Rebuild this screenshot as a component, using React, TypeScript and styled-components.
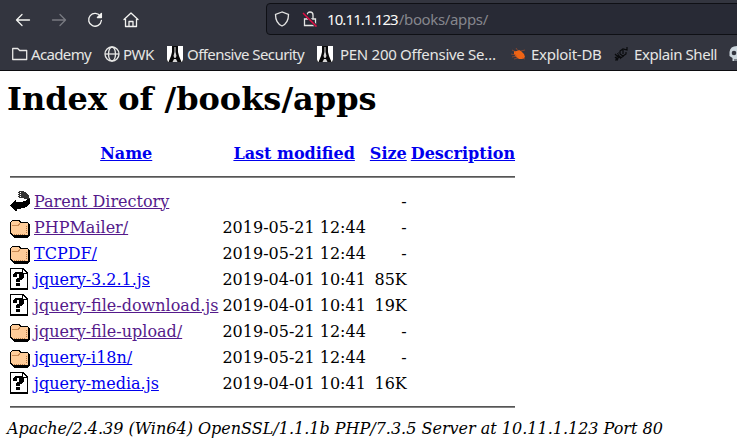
import React from 'react';
import styled, { createGlobalStyle } from 'styled-components';

const GlobalStyle = createGlobalStyle`
  html, body { margin: 0; background: #fff; overflow: hidden; }
`;

const Window = styled.div`
  width: 737px;
  height: 448px;
  overflow: hidden;
`;

const Chrome = styled.header`
  box-sizing: border-box;
  height: 71px;
  background: #33353f;
  border-bottom: 1px solid #0c0c10;
  font-family: 'Noto Sans', sans-serif;
  font-size: 15px;
  color: #e6e6e4;
  overflow: hidden;
`;

const NavBar = styled.nav`
  display: flex;
  align-items: center;
  height: 38px;
  padding-left: 15px;
`;

const NavIcon = styled.svg<{ $dim?: boolean }>`
  flex: none;
  width: 16px;
  height: 16px;
  margin: 2px 20px 0 0;
  fill: none;
  stroke: ${(p) => (p.$dim ? '#797a81' : '#f3f3f1')};
  stroke-width: 1.3;
  stroke-linecap: round;
  stroke-linejoin: round;
`;

const AddressBar = styled.div`
  box-sizing: border-box;
  display: flex;
  align-items: center;
  flex: none;
  width: 500px;
  height: 32px;
  margin-left: 107px;
  padding-left: 7px;
  background: #282a35;
  border: 1px solid #0f1015;
  border-radius: 4px;
`;

const BarIcon = styled.svg`
  flex: none;
  width: 16px;
  height: 16px;
  margin-right: 12px;
  fill: none;
  stroke: #e5e5e4;
  stroke-width: 1.3;
`;

const Url = styled.span`
  white-space: pre;
  color: #85868d;
  margin-left: -3px;
  letter-spacing: -0.36px;
`;

const Host = styled.span`
  color: #fafaf8;
  letter-spacing: -0.9px;
  margin-right: 1px;
`;

const Bookmarks = styled.div`
  display: flex;
  height: 32px;
  padding-left: 12px;
`;

const Bookmark = styled.div<{ $width: number }>`
  display: flex;
  flex: none;
  align-items: center;
  width: ${(p) => p.$width}px;
  white-space: nowrap;
`;

const BookmarkLabel = styled.span<{ $gap: number; $spacing: number }>`
  margin-left: ${(p) => p.$gap}px;
  letter-spacing: ${(p) => p.$spacing}px;
`;

const BookmarkIcon = styled.svg`
  flex: none;
  width: 16px;
  height: 16px;
`;

const Page = styled.main`
  padding: 9px 7px 0;
  font-family: 'DejaVu Serif', serif;
  font-size: 16px;
  line-height: 19px;
  color: #000;
`;

const Title = styled.h1`
  margin: 0 0 23px;
  font-size: 32px;
  line-height: 38px;
  font-weight: bold;
`;

const Listing = styled.table`
  border-collapse: separate;
  border-spacing: 2px;
  white-space: pre;
`;

const Cell = styled.td<{ $right?: boolean }>`
  padding: 1px;
  text-align: ${(p) => (p.$right ? 'right' : 'left')};
`;

const Heading = styled.th`
  padding: 1px;
  vertical-align: top;
`;

const Link = styled.a<{ $visited?: boolean }>`
  color: ${(p) => (p.$visited ? '#551a8b' : '#0000ee')};
  text-decoration: underline;
`;

const Rule = styled.hr<{ $top?: boolean }>`
  height: 0;
  margin: ${(p) => (p.$top ? 9 : 8)}px 0 8px;
  border: solid;
  border-width: 1px 0;
  border-color: #555 transparent #858585;
`;

const FileIcon = styled.svg`
  display: block;
  width: 20px;
  height: 22px;
`;

const Signature = styled.address`
  font-style: italic;
  white-space: nowrap;
`;

type Kind = 'back' | 'folder' | 'unknown';

const EntryIcon = ({ kind }: { kind: Kind }) => (
  <FileIcon viewBox="0 0 20 22" shapeRendering="crispEdges">
    {kind === 'back' && (
      <>
        <path fill="#000" d="M0 15 6 9v3h4l5-1 3-2h2v4l-2 3-4 2-7 1v2H5Z" />
        <path fill="#333" d="M8 1h5l4 2 2 3 1 3h-5l-3-1H8Z" />
        <path stroke="#fff" strokeDasharray="1 1" d="M8.5 1v7M10.5 2v6" />
      </>
    )}
    {kind === 'folder' && (
      <>
        <path fill="#000" d="M2 4h7l2 2h6l2 2 1 1v10l-2 3H4l-4-4V6Z" />
        <path fill="#ffcc99" d="M2 5h7l1 2h7l1 1v10l-1 1H3l-2-2V6Z" />
        <path fill="none" stroke="#c98a54" d="M2 9.500h6l2-2" />
        <path fill="none" stroke="#b77945" strokeDasharray="1 1" d="M16.500 10v8M4 18.500h12" />
      </>
    )}
    {kind === 'unknown' && (
      <>
        <path fill="#000" d="M0 0h13l5 5v17H0Z" />
        <path fill="#fff" d="M1 1h11v5h5v14H1Z" />
        <path fill="#fff" d="M13 2v3h3Z" />
        <path fill="#000" d="M3 6h1V5h1V4h7v1h1v1h1v4h-1v1h-1v1h-2v2H6v-3h1v-1h2V6H7v3H3ZM6 15h4v3H6Z" />
      </>
    )}
  </FileIcon>
);

const OffSecIcon = () => (
  <BookmarkIcon viewBox="0 0 16 16">
    <path fill="#fff" d="M0 0h16v16H0Z" />
    <path fill="#090909" d="M5 0h6v6l1 4 2.500 6h-13L4 10l1-4Z" />
    <path fill="#222" d="M0 13.500V16h1ZM16 13.500V16h-1Z" />
    <path fill="#d8d8d8" d="M7.500 1h1v5l1 4-1 2h-1l-1-2 1-4ZM7 13h2l1.500 3h-5Z" />
  </BookmarkIcon>
);

interface Entry {
  kind: Kind;
  name: string;
  date?: string;
  size: string;
  visited?: boolean;
}

const entries: Entry[] = [
  { kind: 'back', name: 'Parent Directory', size: '-', visited: true },
  { kind: 'folder', name: 'PHPMailer/', date: '2019-05-21 12:44', size: '-', visited: true },
  { kind: 'folder', name: 'TCPDF/', date: '2019-05-21 12:44', size: '-' },
  { kind: 'unknown', name: 'jquery-3.2.1.js', date: '2019-04-01 10:41', size: '85K' },
  { kind: 'unknown', name: 'jquery-file-download.js', date: '2019-04-01 10:41', size: '19K', visited: true },
  { kind: 'folder', name: 'jquery-file-upload/', date: '2019-05-21 12:44', size: '-', visited: true },
  { kind: 'folder', name: 'jquery-i18n/', date: '2019-05-21 12:44', size: '-' },
  { kind: 'unknown', name: 'jquery-media.js', date: '2019-04-01 10:41', size: '16K' },
];

const BrowserChrome = () => (
  <Chrome>
    <NavBar>
      <NavIcon viewBox="0 0 16 16"><path d="M14.500 8H1.500M7 2.500 1.500 8 7 13.500" /></NavIcon>
      <NavIcon $dim viewBox="0 0 16 16"><path d="M1.500 8h13M9 2.500 14.500 8 9 13.500" /></NavIcon>
      <NavIcon viewBox="0 0 16 16">
        <path d="M13.500 4.500A6.400 6.400 0 1 0 14.400 8.500" />
        <path fill="#f3f3f1" d="M14.400 1.500v4h-4Z" />
      </NavIcon>
      <NavIcon viewBox="0 0 16 16">
        <path d="M1 7.500 8 1l7 6.500M2.500 7v7.500h11V7M6 14V9.500h4V14" />
      </NavIcon>
      <AddressBar>
        <BarIcon viewBox="0 0 16 16">
          <path d="M8 1 1.500 3.500C1.500 9 3.500 13 8 15c4.500-2 6.500-6 6.500-11.500Z" />
        </BarIcon>
        <BarIcon viewBox="0 0 16 16">
          <path d="M2.500 8h11v6.500h-11ZM5 8V4a3 3 0 0 1 6 0v4" />
          <path stroke="#282a35" strokeWidth="3" d="m2 2 12 13" />
          <path stroke="#e30c43" strokeWidth="1.500" d="m1 2 13.500 13.500" />
        </BarIcon>
        <Url><Host>10.11.1.123</Host>/books/apps/</Url>
      </AddressBar>
    </NavBar>
    <Bookmarks>
      <Bookmark $width={92}>
        <BookmarkIcon viewBox="0 0 16 16">
          <path fill="none" stroke="#e8e8e6" strokeWidth="1.3" strokeLinejoin="round" d="M.7 2.500h5l2 2h7v9H.7Z" />
        </BookmarkIcon>
        <BookmarkLabel $gap={3} $spacing={-0.65}>Academy</BookmarkLabel>
      </Bookmark>
      <Bookmark $width={63}>
        <BookmarkIcon viewBox="0 0 16 16">
          <g fill="none" stroke="#e8e8e6" strokeWidth="1.3">
            <circle cx="8" cy="8" r="7" /><ellipse cx="8" cy="8" rx="3.500" ry="7" /><path d="M1 8h14" />
          </g>
        </BookmarkIcon>
        <BookmarkLabel $gap={3} $spacing={-0.5}>PWK</BookmarkLabel>
      </Bookmark>
      <Bookmark $width={150}>
        <OffSecIcon />
        <BookmarkLabel $gap={4} $spacing={-0.56}>Offensive Security</BookmarkLabel>
      </Bookmark>
      <Bookmark $width={194}>
        <OffSecIcon />
        <BookmarkLabel $gap={7} $spacing={-0.28}>PEN 200 Offensive Se…</BookmarkLabel>
      </Bookmark>
      <Bookmark $width={103}>
        <BookmarkIcon viewBox="0 0 16 16">
          <path fill="#f06414" d="m3 5 3 0 2-1 2 1 3 3 1 3-2 2-4 0-3-2-2-3Z" />
          <path stroke="#a94e29" strokeWidth=".7" fill="none" d="m0 8 5 1M1 11l5-1M5 2l2 3M10 5l4-1M1 4l4 2M11 12l3 1M3 13l4-1" />
        </BookmarkIcon>
        <BookmarkLabel $gap={4} $spacing={-0.27}>Exploit-DB</BookmarkLabel>
      </Bookmark>
      <Bookmark $width={115}>
        <BookmarkIcon viewBox="0 0 16 16">
          <path fill="none" stroke="#090a0c" strokeWidth="1.2" d="M13 1v3l-4-1-3 2v3l3 2 3-2V6M9 4v4M1 8l4 4M1 11l3 3M4 9l3 4M1 14h3M6 10l-4 4M10 10l-4 2" />
          <path fill="none" stroke="#090a0c" strokeDasharray="1 1" d="m3 7 5 5m-6 0 3-6" />
        </BookmarkIcon>
        <BookmarkLabel $gap={4} $spacing={-0.42}>Explain Shell</BookmarkLabel>
      </Bookmark>
      <Bookmark $width={16}>
        <BookmarkIcon viewBox="0 0 16 16">
          <path fill="#cbd5dc" d="M.5 6Q1 0 8 0t7.500 6v5l-3 1v3h-9v-3l-3-2Z" />
          <circle cx="5" cy="7" r="2.300" fill="#33353f" /><circle cx="11" cy="7" r="2.300" fill="#33353f" />
          <path stroke="#33353f" d="M6 13v3M8 13v3M10 13v3" />
        </BookmarkIcon>
      </Bookmark>
    </Bookmarks>
  </Chrome>
);

export default function App() {
  return (
    <Window>
      <GlobalStyle />
      <BrowserChrome />
      <Page>
        <Title>Index of /books/apps</Title>
        <Listing>
          <tbody>
            <tr>
              <Heading />
              <Heading><Link>Name</Link></Heading>
              <Heading><Link>Last modified</Link></Heading>
              <Heading><Link>Size</Link></Heading>
              <Heading><Link>Description</Link></Heading>
            </tr>
            <tr><Heading colSpan={5}><Rule $top /></Heading></tr>
            {entries.map((e) => (
              <tr key={e.name}>
                <Cell><EntryIcon kind={e.kind} /></Cell>
                <Cell><Link $visited={e.visited}>{e.name}</Link></Cell>
                <Cell $right>{e.date}</Cell>
                <Cell $right>{e.size}</Cell>
                <Cell />
              </tr>
            ))}
            <tr><Heading colSpan={5}><Rule /></Heading></tr>
          </tbody>
        </Listing>
        <Signature>Apache/2.4.39 (Win64) OpenSSL/1.1.1b PHP/7.3.5 Server at 10.11.1.123 Port 80</Signature>
      </Page>
    </Window>
  );
}
